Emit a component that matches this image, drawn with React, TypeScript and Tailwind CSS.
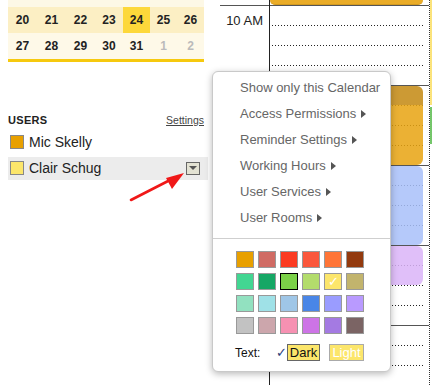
const weeks = [
  { days: ['20', '21', '22', '23', '24', '25', '26'], bg: 'bg-[#fcefc4]' },
  { days: ['27', '28', '29', '30', '31', '1', '2'], bg: 'bg-[#fef9e8]' },
];

const swatches = [
  ['#e8a000', '#d06b64', '#fb3b22', '#fa573c', '#ff7537', '#933a0e'],
  ['#42d692', '#16a765', '#7bd148', '#b3dc6c', '#fce66b', '#c2b46d'],
  ['#92e1c0', '#9fe1e7', '#9fc6e7', '#4986e7', '#9a9cff', '#b99aff'],
  ['#c2c2c2', '#cca6ac', '#f691b2', '#cd74e6', '#a47ae2', '#7b6464'],
];

const menuItems = [
  { label: 'Show only this Calendar', sub: false },
  { label: 'Access Permissions', sub: true },
  { label: 'Reminder Settings', sub: true },
  { label: 'Working Hours', sub: true },
  { label: 'User Services', sub: true },
  { label: 'User Rooms', sub: true },
];

const Dots = () => (
  <div className="ml-[2px] mr-[6px] h-px bg-[image:repeating-linear-gradient(to_right,#222_0_1px,transparent_1px_3px)]" />
);

const HourBlock = () => (
  <div className="h-[80px] border-t border-[#555] flex flex-col">
    <div className="h-[19px]" />
    <Dots />
    <div className="h-[19px]" />
    <Dots />
    <div className="h-[19px]" />
    <Dots />
  </div>
);

const App = () => {
  return (
    <div className="relative w-[432px] h-[385px] overflow-hidden bg-white flex font-['Liberation_Sans',Arial,sans-serif]">
      {/* left sidebar */}
      <div className="w-[212px] shrink-0 pl-2">
        <div className="w-[196px]">
          <div className="h-[7px] bg-[#fdf8e6]" />
          {weeks.map((w, wi) => (
            <div key={wi} className={`grid grid-cols-[29px_29px_29px_28px_27px_27px_27px] h-[26px] ${w.bg}`}>
              {w.days.map((d) => (
                <div
                  key={d}
                  className={`flex items-center justify-center text-[12px] font-bold ${
                    d === '24' ? 'bg-[#fdd83a] text-[#222]' : wi === 1 && (d === '1' || d === '2') ? 'text-[#bbb]' : 'text-[#222]'
                  }`}
                >
                  {d}
                </div>
              ))}
            </div>
          ))}
          <div className="h-[3px] bg-[#f6c90e]" />
        </div>

        <div className="mt-[50px] w-[196px] flex items-baseline justify-between">
          <span className="text-[11px] font-bold tracking-[0.3px] text-[#222]">USERS</span>
          <span className="text-[10.5px] text-[#444] underline">Settings</span>
        </div>

        <div className="mt-[2px] flex flex-col gap-[3px]">
          <div className="h-[23px] flex items-center">
            <div className="ml-[2px] w-[14px] h-[14px] border border-[#888] bg-[#e8a000]" />
            <span className="ml-[5px] text-[14px] text-[#222]">Mic Skelly</span>
          </div>
          <div className="h-[23px] w-[200px] flex items-center bg-[#ececec]">
            <div className="ml-[2px] w-[14px] h-[14px] border border-[#888] bg-[#fce66b]" />
            <span className="ml-[5px] text-[14px] text-[#222]">Clair Schug</span>
            <div className="ml-auto mr-[8px] w-[14px] h-[13px] border border-[#666] bg-[#e3e2d3] flex items-center justify-center">
              <div className="w-0 h-0 border-l-[4px] border-r-[4px] border-t-[4px] border-l-transparent border-r-transparent border-t-[#555]" />
            </div>
          </div>
        </div>
      </div>

      {/* time gutter */}
      <div className="w-[58px] shrink-0 border-r border-[#222]">
        <div className="mt-[5px] ml-[8px] border-t border-[#555] pt-[5px] pr-[6px] text-right text-[13px] text-[#222]">10 AM</div>
      </div>

      {/* day column */}
      <div className="relative w-[160px] shrink-0 border-r border-dotted border-[#333]">
        <div className="h-[5px]" />
        <HourBlock />
        <HourBlock />
        <HourBlock />
        <HourBlock />
        <HourBlock />

        <div className="absolute left-0 top-[-6px] w-[153px] h-[11px] rounded-b-[5px] bg-[#e8a310]/90 border-b border-[#d39a20]" />
        <div className="absolute left-0 top-[86px] w-[153px] h-[79px] rounded-[6px] overflow-hidden flex flex-col">
          <div className="h-[19px] bg-[#c38810]/85" />
          <div className="flex-1 bg-[#e8a310]/85" />
        </div>
        <div className="absolute left-0 top-[166px] w-[153px] h-[79px] rounded-[6px] bg-[#a8c0f9]/85" />
        <div className="absolute left-0 top-[246px] w-[153px] h-[39px] rounded-[6px] bg-[#dab4f8]/85" />
      </div>

      {/* next column peek */}
      <div className="flex-1 flex flex-col">
        <div className="h-[105px] bg-[#fbe37a]" />
        <div className="mt-[2px] h-[37px] bg-[#74c66a]" />
      </div>

      {/* red arrow */}
      <svg className="absolute left-0 top-0 w-[432px] h-[385px] pointer-events-none" viewBox="0 0 432 385">
        <line x1="131" y1="200" x2="172" y2="179" stroke="#f01818" strokeWidth="2.6" strokeLinecap="round" />
        <polygon points="184,173 166,178 172,189" fill="#f01818" />
      </svg>

      {/* context menu */}
      <div className="absolute left-[212px] top-[71px] w-[179px] h-[301px] rounded-[6px] border border-[#c9c9c9] bg-white shadow-[0_2px_7px_rgba(0,0,0,0.28)]">
        <div className="pt-[3px]">
          {menuItems.map((m) => (
            <div key={m.label} className="h-[26px] pl-[27px] flex items-center text-[13px] text-[#666]">
              <span>{m.label}</span>
              {m.sub && (
                <span className="ml-[5px] w-0 h-0 border-t-[4px] border-b-[4px] border-l-[5px] border-t-transparent border-b-transparent border-l-[#555]" />
              )}
            </div>
          ))}
        </div>
        <div className="mt-[7px] h-px bg-[#cfcfcf]" />
        <div className="mt-[12px] pl-[23px] grid grid-cols-[repeat(6,18px)] gap-x-[4px] gap-y-[5px]">
          {swatches.flat().map((c) => (
            <div
              key={c}
              className={`h-[17px] border flex items-center justify-center text-[13px] leading-none text-white ${
                c === '#7bd148' ? 'border-black' : 'border-[#999]'
              }`}
              style={{ backgroundColor: c }}
            >
              {c === '#fce66b' ? '✓' : ''}
            </div>
          ))}
        </div>
        <div className="mt-[10px] pl-[22px] h-[17px] flex items-center">
          <span className="w-[41px] text-[12px] text-[#111]">Text:</span>
          <span className="w-[11px] text-[13px] text-[#2a3d7a]">✓</span>
          <span className="w-[33px] h-[17px] border border-[#666] bg-[#fce66b] flex items-center justify-center text-[13px] text-[#111]">Dark</span>
          <span className="ml-[9px] w-[35px] h-[17px] border border-[#aaa] bg-[#fce66b] flex items-center justify-center text-[13px] text-white">Light</span>
        </div>
      </div>
    </div>
  );
};

export default App;
